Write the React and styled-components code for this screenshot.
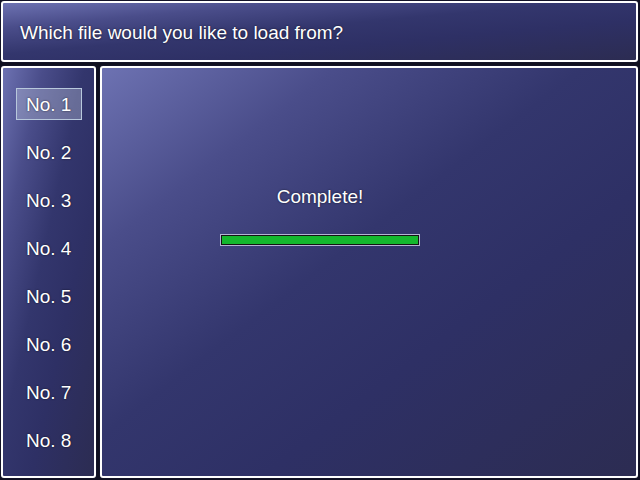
import React from 'react'
import styled, { createGlobalStyle } from 'styled-components'

const GlobalStyle = createGlobalStyle`
  html, body {
    margin: 0;
    padding: 0;
    background: #000;
  }
  body {
    font-family: 'Liberation Sans', Arial, sans-serif;
  }
`

const Screen = styled.div`
  width: 640px;
  height: 480px;
  display: grid;
  grid-template-columns: 98px 542px;
  grid-template-rows: 64px 416px;
  background: #101020;
  overflow: hidden;
`

const Window = styled.div`
  grid-column: ${(p) => p.$span || 'auto'};
  margin: ${(p) => p.$margin || '2px 2px 2px 2px'};
  border: 2px solid #fff;
  border-radius: 3px;
  box-shadow: 0 0 0 1px #141428;
  background: linear-gradient(to bottom right, #6d72b2 0%, #4a4d8a 22%, #33366d 45%, #2e3065 65%, #2c2c52 100%);
  color: #fff;
  font-size: 19px;
  text-shadow: 0 0 2px rgba(0, 0, 0, 0.7);
  display: flex;
  flex-direction: column;
`

const HelpText = styled.div`
  padding: 2px 0 0 17px;
  height: 100%;
  box-sizing: border-box;
  display: flex;
  align-items: center;
`

const List = styled.div`
  display: flex;
  flex-direction: column;
  gap: 16px;
  padding: 20px 0 0 13px;
`

const Item = styled.div`
  width: 66px;
  height: 32px;
  box-sizing: border-box;
  padding: 2px 0 0 9px;
  display: flex;
  align-items: center;
  border: 1px solid ${(p) => (p.$selected ? '#b8c8dc' : 'transparent')};
  background: ${(p) => (p.$selected ? 'rgba(200, 210, 230, 0.35)' : 'transparent')};
`

const Status = styled.div`
  width: 200px;
  margin: 113px 0 0 118px;
  display: flex;
  flex-direction: column;
  align-items: center;
`

const Label = styled.div`
  height: 32px;
  display: flex;
  align-items: center;
`

const Bar = styled.div`
  width: 200px;
  height: 12px;
  margin-top: 21px;
  box-sizing: border-box;
  border: 1px solid #b4b4d4;
  padding: 1px;
  background: #141414;
`

const Fill = styled.div`
  height: 100%;
  background: #14b82e;
`

const slots = [1, 2, 3, 4, 5, 6, 7, 8]

export default function App() {
  return (
    <>
      <GlobalStyle />
      <Screen>
        <Window $span="1 / 3" $margin="1px 2px 2px 1px">
          <HelpText>Which file would you like to load from?</HelpText>
        </Window>
        <Window $margin="2px 2px 2px 1px">
          <List>
            {slots.map((n) => (
              <Item key={n} $selected={n === 1}>
                No. {n}
              </Item>
            ))}
          </List>
        </Window>
        <Window>
          <Status>
            <Label>Complete!</Label>
            <Bar>
              <Fill style={{ width: '100%' }} />
            </Bar>
          </Status>
        </Window>
      </Screen>
    </>
  )
}
